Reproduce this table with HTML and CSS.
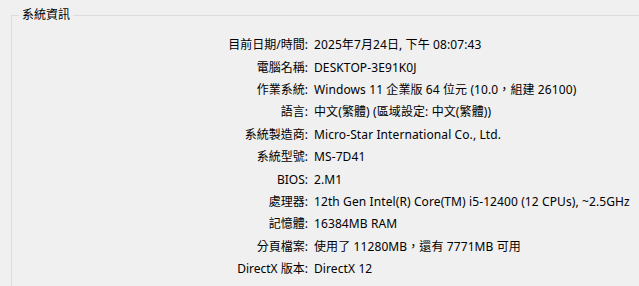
FILE: index.html
```html
<!DOCTYPE html>
<html lang="zh-Hant">
<head>
<meta charset="utf-8">
<title>系統資訊</title>
<link rel="stylesheet" href="styles.css">
</head>
<body>
<fieldset class="group">
  <legend class="group-title">系統資訊</legend>
  <div class="info">
    <div class="label">目前日期/時間:</div><div class="value">2025年7月24日, 下午 08:07:43</div>
    <div class="label">電腦名稱:</div><div class="value">DESKTOP-3E91K0J</div>
    <div class="label">作業系統:</div><div class="value">Windows 11 企業版 64 位元 (10.0，組建 26100)</div>
    <div class="label">語言:</div><div class="value">中文(繁體) (區域設定: 中文(繁體))</div>
    <div class="label">系統製造商:</div><div class="value">Micro-Star International Co., Ltd.</div>
    <div class="label">系統型號:</div><div class="value">MS-7D41</div>
    <div class="label">BIOS:</div><div class="value">2.M1</div>
    <div class="label">處理器:</div><div class="value">12th Gen Intel(R) Core(TM) i5-12400 (12 CPUs), ~2.5GHz</div>
    <div class="label">記憶體:</div><div class="value">16384MB RAM</div>
    <div class="label">分頁檔案:</div><div class="value">使用了 11280MB，還有 7771MB 可用</div>
    <div class="label">DirectX 版本:</div><div class="value">DirectX 12</div>
  </div>
</fieldset>
</body>
</html>
```

FILE: styles.css
```css
html, body {
  margin: 0;
  padding: 0;
  background: #f0f0f0;
  overflow: hidden;
}
body {
  font-family: "Segoe UI", "Noto Sans", "Noto Sans CJK TC", sans-serif;
  font-size: 12px;
  color: #000;
  padding-top: 8px;
  height: 286px;
  box-sizing: border-box;
}
.group {
  box-sizing: border-box;
  margin: 0 0 0 11px;
  padding: 0;
  border: 0;
  border-top: 1px solid #dcdcdc;
  border-left: 1px solid #dcdcdc;
  min-width: 0;
  height: 278px;
}
.group-title {
  margin-left: 7px;
  padding: 0 3px;
  line-height: 14px;
}
.info {
  display: grid;
  grid-template-columns: 296px auto;
  grid-auto-rows: 22.4px;
  column-gap: 6px;
  align-items: center;
  margin-top: 12px;
  line-height: 16px;
  white-space: nowrap;
}
.label {
  text-align: right;
}
.value {
  letter-spacing: 0.1px;
}
```
